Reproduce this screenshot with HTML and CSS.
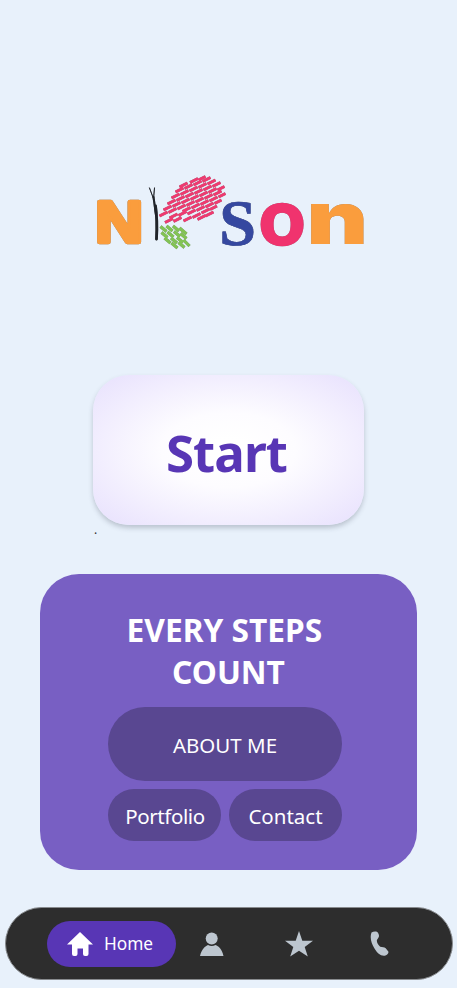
FILE: index.html
```html
<!DOCTYPE html>
<html lang="en">
<head>
<meta charset="utf-8">
<meta name="viewport" content="width=device-width">
<title>Nipson</title>
<link rel="stylesheet" href="styles.css">
</head>
<body>
<main class="page">
  <svg class="logo" viewBox="90 140 280 145" role="img" aria-label="Nipson">
    <text class="letter letter-cap" transform="translate(95.200 241.500) scale(1.14 1)">N</text>
    <g class="stem"><path d="M155.500 206Q157.500 220 156.500 239" stroke-width="2.8"/><path d="M153.500 197L156 215" stroke-width="2"/><path d="M149.500 188L154 200M154.500 188L153.500 199" stroke-width="1"/></g>
    <path class="brick brick-red" d="M159.5 216l8-4M163.500 210l8-4M167.500 204l8-4M171.500 198l8-4M175.500 192l8-4M179.500 187l8-4M165 222.500l8-4M168.500 212.500l8-4M172.500 206.500l8-4M176.500 200.500l8-4M180.500 194.500l8-4M184.500 188.500l8-4M190 182.500l8-4M169.500 218l8-4M173.500 221.500l8-4M177.500 209l8-4M181.500 203l8-4M185.500 197l8-4M189.500 191l8-4M193.500 185l8-4M198.500 180l7-3.500M182.500 211.500l8-4M178.500 215.500l8-4M186.500 205.500l8-4M190.500 199.500l8-4M194.500 193.500l8-4M198.500 187.500l8-4M202.500 181.500l8-4M183.500 221l8-4M187.500 214l8-4M191.500 208l8-4M195.500 202l8-4M199.500 196l8-4M203.500 190l8-4M207.500 184l8-4M192.500 217.500l8-4M196.500 210.500l8-4M200.500 204.500l8-4M204.500 198.500l8-4M208.500 192.500l8-4M212.500 186.500l8-4M197.500 219.500l8-4M201.500 213l8-4M205.500 207l8-4M209.500 201l8-4M213.500 195l8-4M217.500 190l7-3.500M205.500 216l8-4M210 209.500l7-3.500M214.500 203.500l7-3.500M218.500 197l7-3.500"/>
    <path class="brick brick-green" d="M160.500 226.500l6 5M166.500 226l6 5M173 226l6 5M179.500 228l7 6M161.500 232.500l6 5M167.500 232l6 5M174 231.500l6 5M180.500 233.500l6 5M164.500 238l6 5M171 238l6 5M177 237.500l6 5M171.500 243l6 5M178.500 242.500l6 5M183.500 240l6 6"/>
    <text class="letter letter-s" x="237.500" y="245" text-anchor="middle">S</text>
    <text class="letter letter-o" x="282" y="244.500" text-anchor="middle">o</text>
    <text class="letter letter-n" transform="translate(306.500 244) scale(1.3 1)">n</text>
  </svg>
  <button class="start">Start</button>
  <span class="dot">.</span>
  <section class="card">
    <h1 class="card-title">EVERY STEPS&nbsp;<br>COUNT</h1>
    <div class="links">
      <a class="link link-wide">ABOUT ME</a>
      <a class="link link-tight">Portfolio</a>
      <a class="link">Contact</a>
    </div>
  </section>
  <nav class="nav">
    <a class="tab tab-active">
      <svg class="icon icon-home" viewBox="0 0 26 26"><path d="M13 1L26 13.500H21.500V23Q21.500 25 19.500 25H18Q16 25 16 23V17.500H10.500V23Q10.500 25 8.500 25H7Q5 25 5 23V13.500H0Z"/></svg>
      <span>Home</span>
    </a>
    <a class="tab"><svg class="icon" viewBox="0 0 26 26"><circle cx="12.700" cy="7.500" r="6"/><path d="M1 25C2.500 18 6.500 15 9 14Q12.700 16 16.500 14C19.500 15 23 18 24.500 25Z"/></svg></a>
    <a class="tab tab-star"><svg class="icon icon-star" viewBox="0 0 28 26"><path d="M14 0L17.300 9.800H28L19.700 16L22.800 25.500L14 19.800L5.200 25.500L8.300 16L0 9.800H10.700Z"/></svg></a>
    <a class="tab"><svg class="icon icon-phone" viewBox="0 0 20 26"><path d="M1.500 1.600C3.500.2 7 .1 8 1.800C9.800 4.800 9 6.500 7.200 8.400C6.200 10 7.500 13.500 10.200 15.800C12.500 16.400 14.200 16 15.700 17.300L18.300 20.600C19 21.700 17 24 15.500 24.500C11 25.500 7.500 22.500 4.500 17.500C1.500 12.800-.5 6.500 1.500 1.600Z"/></svg></a>
  </nav>
</main>
</body>
</html>
```
FILE: styles.css
```css
* { box-sizing: border-box; }
body { margin: 0; background: #e8f1fb; font-family: "Noto Sans", sans-serif; }
.page { height: 988px; padding: 140px 5px 7px; display: flex; flex-direction: column; align-items: center; overflow: hidden; }
.logo { width: 280px; height: 145px; margin-left: 3px; flex: none; filter: drop-shadow(0 0 .5px rgba(60, 60, 60, .6)); }
.letter { paint-order: stroke; stroke-linejoin: round; }
.letter-cap { font: 700 58px "Liberation Sans", sans-serif; fill: #fa9d3d; stroke: #fa9d3d; stroke-width: 4.5; }
.letter-s { font: 700 66px "Liberation Serif", serif; fill: #3548a0; stroke: #3548a0; stroke-width: .6; }
.letter-o { font: 900 80px Lato, sans-serif; fill: #f0336e; stroke: #f0336e; stroke-width: 1.6; }
.letter-n { font: 900 73px Inter, sans-serif; fill: #fa9d3d; }
.stem { fill: none; stroke: #20242a; stroke-linecap: round; }
.brick { fill: none; stroke-width: 3; }
.brick-red { stroke: #ee3a70; }
.brick-green { stroke: #82c354; }
.start { width: 271px; height: 150px; margin-top: 90px; flex: none; border: 0; border-radius: 36px; color: #5836b5; background: radial-gradient(ellipse at center, #fff 10%, #fdfcff 35%, #e7e0fd 100%); box-shadow: 0 3px 5px rgba(50, 60, 80, .25); font: 700 51px/1 "Noto Sans", sans-serif; letter-spacing: -.9px; padding: 5px 4px 0 0; }
.dot { align-self: flex-start; margin: -1px 0 0 89px; height: 50px; font-size: 12px; line-height: 12px; color: #333; }
.card { width: 377px; height: 296px; flex: none; border-radius: 39px; background: #785fc3; padding: 35px 68px 28px; }
.card-title { margin: 0; color: #fff; font-size: 31.7px; line-height: 42px; text-align: center; white-space: nowrap; }
.links { display: grid; grid-template-columns: 113px 113px; grid-template-rows: 74px 52px; gap: 8px; margin-top: 14px; }
.link { display: flex; align-items: center; justify-content: center; border-radius: 27px; background: #594791; color: #fff; font-size: 20.5px; padding-top: 2px; }
.link-wide { grid-column: span 2; border-radius: 37px; }
.link-tight { letter-spacing: -.4px; padding-left: 1px; }
.nav { width: 448px; height: 73px; margin-top: 37px; flex: none; border: 1px solid #888b8e; border-radius: 37px; background: #2d2d2d; padding-left: 41px; display: flex; align-items: center; }
.tab { width: 84px; display: flex; justify-content: center; color: #bdc6cf; }
.tab-active { width: 129px; height: 46px; border-radius: 23px; background: #5836b5; color: #fff; gap: 11px; align-items: center; font-size: 17.3px; padding-right: 2px; margin-right: -6px; }
.tab-star { padding-left: 6px; }
.icon { width: 26px; height: 26px; fill: currentColor; flex: none; }
.icon-star { width: 28px; }
.icon-phone { width: 20px; }
```
